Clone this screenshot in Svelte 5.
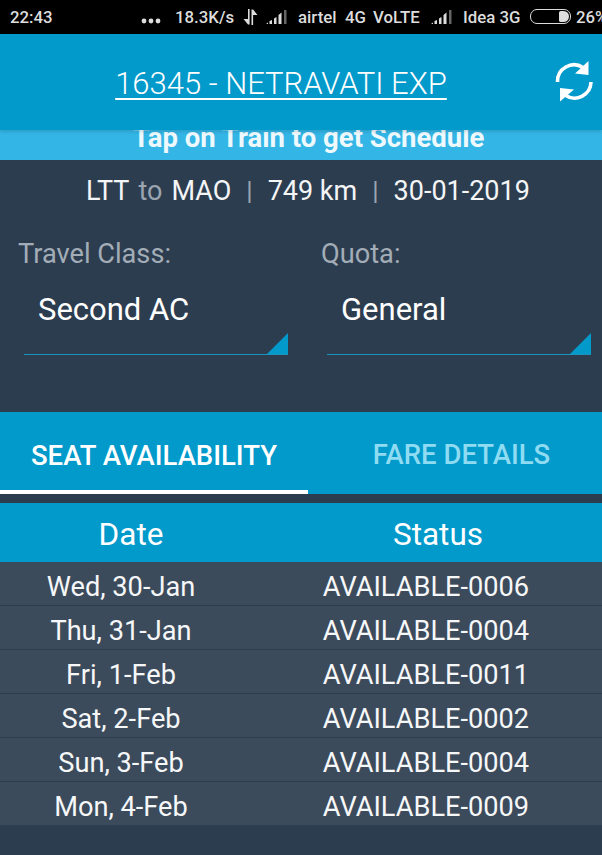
<script lang="ts">
  const selectors = [
    { label: 'Travel Class:', value: 'Second AC' },
    { label: 'Quota:', value: 'General' }
  ];

  const rows = [
    { date: 'Wed, 30-Jan', status: 'AVAILABLE-0006' },
    { date: 'Thu, 31-Jan', status: 'AVAILABLE-0004' },
    { date: 'Fri, 1-Feb', status: 'AVAILABLE-0011' },
    { date: 'Sat, 2-Feb', status: 'AVAILABLE-0002' },
    { date: 'Sun, 3-Feb', status: 'AVAILABLE-0004' },
    { date: 'Mon, 4-Feb', status: 'AVAILABLE-0009' }
  ];
</script>

{#snippet signal()}
  <svg class="signal" viewBox="0 0 22 16" width="22" height="16">
    <path d="M0 15l2-1.500V15zM3.500 15v-3l2.500-1v4zM8 15V9.500l2.500-1.500v7zM12.500 15V6l3-2.500V15z" fill="#ddd" />
    <rect x="18" y="1" width="2.500" height="14" fill="#666" />
  </svg>
{/snippet}

<div class="screen">
  <div class="statusbar">
    <span class="time">22:43</span>
    <svg class="dots" viewBox="0 0 20 6" width="20" height="6">
      <circle cx="3" cy="3" r="2.400" fill="#ddd" />
      <circle cx="10" cy="3" r="2.400" fill="#ddd" />
      <circle cx="17" cy="3" r="2.400" fill="#ddd" />
    </svg>
    <span class="speed">18.3K/s</span>
    <svg class="updown" viewBox="0 0 16 18" width="16" height="18">
      <path d="M6 1h1.600v15.500H6L1.500 11H6z" fill="#ddd" />
      <path d="M9.500 1.500h1.600L15.500 7h-4.400v10H9.500z" fill="#ddd" />
    </svg>
    {@render signal()}
    <span class="airtel">airtel</span>
    <span class="g4">4G</span>
    <span class="volte">VoLTE</span>
    {@render signal()}
    <span class="idea">Idea 3G</span>
    <span class="battery"><span class="charge"></span></span>
    <span class="percent">26%</span>
  </div>

  <header class="header">
    <h1>16345 - NETRAVATI EXP</h1>
    <svg class="refresh" viewBox="0 0 40 44" width="40" height="44">
      <path d="M3.500 23A16.500 16.500 0 0 1 29 8.500" fill="none" stroke="#fff" stroke-width="3.600" />
      <path d="M34.500 2V16L21 14.500z" fill="#fff" />
      <path d="M37 23A16.500 16.500 0 0 1 11 36" fill="none" stroke="#fff" stroke-width="3.600" />
      <path d="M6 42.500V29L20 30.500z" fill="#fff" />
    </svg>
  </header>

  <div class="hint">Tap on Train to get Schedule</div>

  <div class="route">
    <span>LTT</span><span class="muted to">to</span><span>MAO</span>
    <span class="muted sep">|</span>
    <span>749 km</span>
    <span class="muted sep">|</span>
    <span>30-01-2019</span>
  </div>

  <div class="selectors">
    {#each selectors as s}
      <div class="selector">
        <div class="sel-label">{s.label}</div>
        <div class="sel-box">
          <span class="sel-value">{s.value}</span>
          <span class="corner"></span>
        </div>
      </div>
    {/each}
  </div>

  <div class="tabs">
    <div class="tab active">SEAT AVAILABILITY</div>
    <div class="tab">FARE DETAILS</div>
  </div>

  <div class="table-head">
    <div>Date</div>
    <div>Status</div>
  </div>

  <div class="table-body">
    {#each rows as r}
      <div class="row">
        <div>{r.date}</div>
        <div>{r.status}</div>
      </div>
    {/each}
  </div>
</div>

<style>
  :global(body) {
    margin: 0;
    background: #2d3d50;
  }
  .screen {
    width: 602px;
    height: 855px;
    overflow: hidden;
    background: #2d3d50;
    color: #fff;
    font-family: Roboto, "Liberation Sans", sans-serif;
  }

  .statusbar {
    height: 34px;
    background: #000;
    color: #ddd;
    display: flex;
    align-items: center;
    font-size: 16.800px;
    font-weight: 500;
    white-space: nowrap;
    overflow: hidden;
    padding-bottom: 1px;
    box-sizing: border-box;
  }
  .statusbar > * { flex: none; }
  .time { margin-left: 10px; width: 131px; }
  .dots { margin: 8px 14px 0 0; }
  .speed { width: 67px; }
  .updown { margin-right: 8px; }
  .signal { margin-right: 10px; }
  .airtel { width: 47px; }
  .g4 { width: 28px; }
  .volte { width: 58px; }
  .idea { width: 67px; }
  .battery {
    width: 37px;
    height: 11px;
    border: 1px solid #ddd;
    border-radius: 7px;
    display: flex;
    justify-content: flex-end;
    margin-right: 5px;
    box-sizing: content-box;
    padding: 1px;
  }
  .charge {
    width: 10px;
    height: 11px;
    background: #ddd;
    border-radius: 2px 6px 6px 2px;
  }

  .header {
    height: 96px;
    background: #0299cb;
    display: flex;
    align-items: center;
    justify-content: center;
    position: relative;
    box-shadow: 0 2px 3px rgba(0, 0, 0, 0.12);
    z-index: 1;
  }
  h1 {
    margin: 0;
    font-size: 31px;
    font-weight: 300;
    text-decoration: underline;
    text-underline-offset: 4px;
    text-decoration-thickness: 2px;
    padding-top: 2px;
    padding-right: 40px;
  }
  .refresh {
    position: absolute;
    right: 8px;
    top: 25px;
  }

  .hint {
    height: 30px;
    background: #33b5e5;
    text-align: center;
    font-size: 27.500px;
    font-weight: 700;
    line-height: 16px;
    overflow: hidden;
    color: #eef9fd;
    padding-left: 15px;
    box-sizing: border-box;
  }

  .route {
    height: 62px;
    display: flex;
    align-items: center;
    justify-content: center;
    font-size: 27px;
    color: #f4f5f6;
    padding-left: 14px;
    box-sizing: border-box;
  }
  .muted { color: #9aa5b0; }
  .to { margin: 0 9px; }
  .sep { margin: 0 15px; font-size: 26px; }

  .selectors {
    display: grid;
    grid-template-columns: 303px 299px;
    padding-left: 18px;
    height: 190px;
    box-sizing: border-box;
  }
  .sel-label {
    font-size: 27.200px;
    color: #a3adb7;
    line-height: 30px;
    margin-top: 17px;
  }
  .sel-box {
    margin: 8px 0 0 6px;
    width: 264px;
    height: 78px;
    box-sizing: border-box;
    border-bottom: 1px solid #1c93bd;
    position: relative;
    padding: 14px 0 0 14px;
  }
  .sel-value { font-size: 31px; }
  .corner {
    position: absolute;
    right: 0;
    bottom: 0;
    width: 21px;
    height: 21px;
    background: #0299cb;
    clip-path: polygon(100% 0, 100% 100%, 0 100%);
  }

  .tabs {
    display: grid;
    grid-template-columns: 308px 294px;
    height: 82px;
    background: #0299cb;
    font-size: 27.500px;
    font-weight: 500;
  }
  .tab {
    display: flex;
    align-items: center;
    justify-content: center;
    color: #8fdcf2;
    padding: 3px 0 0 13px;
    box-sizing: border-box;
  }
  .tab.active {
    color: #fff;
    border-bottom: 4px solid #fff;
    padding: 8px 0 0;
  }

  .table-head {
    margin-top: 9px;
    height: 59px;
    background: #0299cb;
    display: grid;
    grid-template-columns: 262px 328px;
    gap: 12px;
    align-items: center;
    text-align: center;
    font-size: 31.500px;
    padding-top: 4px;
    box-sizing: border-box;
  }

  .table-body { background: #3c4b5c; }
  .row {
    height: 44px;
    display: grid;
    grid-template-columns: 242px 352px;
    gap: 8px;
    align-items: center;
    text-align: center;
    font-size: 27.200px;
    color: #f6f7f8;
    border-bottom: 1px solid #2d3d50;
    box-sizing: border-box;
    padding-top: 7px;
  }
</style>
